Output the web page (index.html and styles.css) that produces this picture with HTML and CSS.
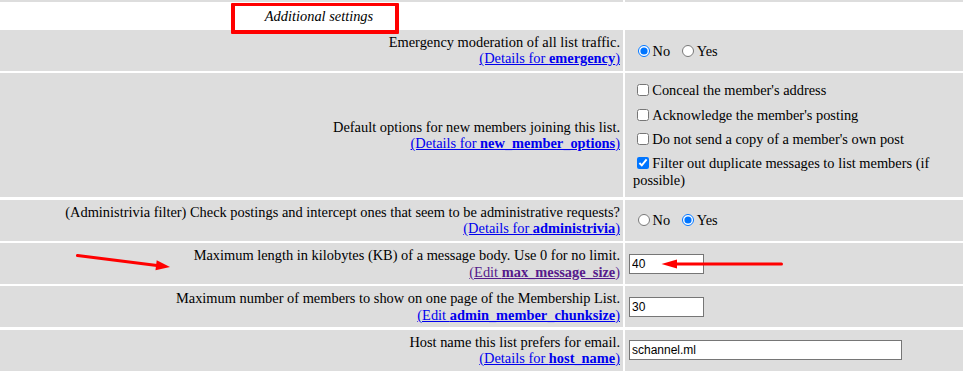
FILE: index.html
```html
<!DOCTYPE html>
<html lang="en">
<head>
<meta charset="UTF-8">
<meta name="viewport" content="width=device-width, initial-scale=1.0">
<title>Privacy options - Additional settings</title>
<link rel="stylesheet" href="styles.css">
</head>
<body>
<div class="settings">
  <div class="row strip">
    <div class="label"></div>
    <div class="value"></div>
  </div>

  <div class="row header">
    <div class="title"><em>Additional settings</em></div>
    <div></div>
  </div>

  <div class="row">
    <div class="label">
      <p>Emergency moderation of all list traffic.<br>
      <a href="#emergency">(Details for <b>emergency</b>)</a></p>
    </div>
    <div class="value">
      <div class="choices">
        <label><input type="radio" name="emergency" checked>No</label>
        <label><input type="radio" name="emergency">Yes</label>
      </div>
    </div>
  </div>

  <div class="row">
    <div class="label">
      <p>Default options for new members joining this list.<br>
      <a href="#new_member_options">(Details for <b>new_member_options</b>)</a></p>
    </div>
    <div class="value">
      <div class="choices checklist">
        <label><input type="checkbox">Conceal the member's address</label>
        <label><input type="checkbox">Acknowledge the member's posting</label>
        <label><input type="checkbox">Do not send a copy of a member's own post</label>
        <label><input type="checkbox" checked>Filter out duplicate messages to list members (if possible)</label>
      </div>
    </div>
  </div>

  <div class="row">
    <div class="label">
      <p>(Administrivia filter) Check postings and intercept ones that seem to be administrative requests?<br>
      <a href="#administrivia">(Details for <b>administrivia</b>)</a></p>
    </div>
    <div class="value">
      <div class="choices">
        <label><input type="radio" name="administrivia">No</label>
        <label><input type="radio" name="administrivia" checked>Yes</label>
      </div>
    </div>
  </div>

  <div class="row">
    <div class="label">
      <p>Maximum length in kilobytes (KB) of a message body. Use 0 for no limit.<br>
      <a href="#max_message_size" class="visited">(Edit <b>max_message_size</b>)</a></p>
    </div>
    <div class="value">
      <input type="text" class="field" value="40">
    </div>
  </div>

  <div class="row">
    <div class="label">
      <p>Maximum number of members to show on one page of the Membership List.<br>
      <a href="#admin_member_chunksize">(Edit <b>admin_member_chunksize</b>)</a></p>
    </div>
    <div class="value">
      <input type="text" class="field" value="30">
    </div>
  </div>

  <div class="row last">
    <div class="label">
      <p>Host name this list prefers for email.<br>
      <a href="#host_name">(Details for <b>host_name</b>)</a></p>
    </div>
    <div class="value">
      <input type="text" class="field wide" value="schannel.ml">
    </div>
  </div>
</div>

<!-- annotations drawn on top of the screenshot -->
<div class="highlight"></div>
<svg class="arrows" width="963" height="371" viewBox="0 0 963 371">
  <line x1="77.5" y1="255.5" x2="157" y2="265.5" />
  <polygon points="170,267 156.7,260.3 155.5,270.2" />
  <line x1="781.5" y1="264" x2="675" y2="264" />
  <polygon points="661.5,264 677,259.6 677,268.6" />
</svg>
</body>
</html>
```

FILE: styles.css
```css
html, body {
  overflow: hidden;
}

body {
  margin: 0;
  background-color: #fff;
  font-family: "Liberation Serif", "Times New Roman", serif;
  font-size: 14.4px;
  line-height: 16.5px;
  color: #000;
}

.settings {
  display: flex;
  flex-direction: column;
  gap: 2.3px;
}

.row {
  display: grid;
  grid-template-columns: 623px 1fr;
  column-gap: 2px;
}

.label,
.value {
  background-color: #dddddd;
  display: flex;
  align-items: center;
  padding: 4px 0;
}

.label {
  justify-content: flex-end;
  text-align: right;
  padding-right: 3px;
}

.label p {
  margin: 0;
}

.value {
  padding-left: 4px;
}

.strip .label,
.strip .value {
  height: 2px;
  padding: 0;
}

.header .title {
  text-align: center;
  padding: 3.45px 0 3.45px 15px;
}

.last .label,
.last .value {
  padding-bottom: 6px;
}

a {
  color: #0000ee;
}

a.visited {
  color: #551a8b;
}

.choices {
  padding-left: 4px;
  padding-top: 1px;
}

.choices input {
  width: 12px;
  height: 12px;
  margin: 0 3px 0 4.5px;
  vertical-align: -1px;
}

.choices label + label {
  margin-left: 3.5px;
}

.checklist {
  display: flex;
  flex-direction: column;
  gap: 7.9px;
  padding-top: 5px;
  padding-bottom: 5px;
}

.checklist input {
  margin-left: 4.3px;
}

.checklist label + label {
  margin-left: 0;
}

.field {
  box-sizing: border-box;
  width: 75px;
  height: 20px;
  margin: 0;
  padding: 1px 2px;
  border: 1px solid #767676;
  background-color: #fff;
  font-family: "Liberation Sans", Arial, sans-serif;
  font-size: 12px;
  color: #000;
}

.field.wide {
  width: 273px;
}

.highlight {
  position: absolute;
  left: 231px;
  top: 3px;
  width: 160px;
  height: 24px;
  border: 4px solid #ff0000;
  border-top-width: 3.5px;
  border-radius: 1px;
}

.arrows {
  position: absolute;
  left: 0;
  top: 0;
  pointer-events: none;
}

.arrows line {
  stroke: #ff0000;
  stroke-width: 3;
  stroke-linecap: round;
}

.arrows polygon {
  fill: #ff0000;
}
```
